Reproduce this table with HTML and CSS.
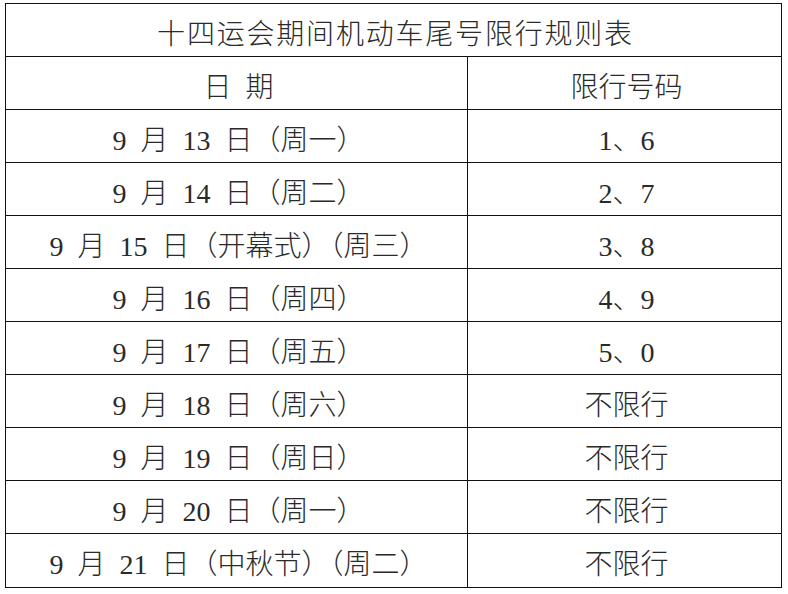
FILE: index.html
```html
<!DOCTYPE html>
<html lang="zh-CN">
<head>
<meta charset="utf-8">
<title>十四运会期间机动车尾号限行规则表</title>
<link rel="stylesheet" href="styles.css">
</head>
<body>
<table class="rules">
  <colgroup><col class="col-date"><col class="col-nums"></colgroup>
  <tr class="title-row"><td colspan="2" class="title">十四运会期间机动车尾号限行规则表</td></tr>
  <tr class="head-row"><td class="date">日 期</td><td class="nums">限行号码</td></tr>
  <tr><td class="date">9 月 13 日（周一）</td><td class="nums">1、6</td></tr>
  <tr><td class="date">9 月 14 日（周二）</td><td class="nums">2、7</td></tr>
  <tr><td class="date">9 月 15 日（开幕式）（周三）</td><td class="nums">3、8</td></tr>
  <tr><td class="date">9 月 16 日（周四）</td><td class="nums">4、9</td></tr>
  <tr><td class="date">9 月 17 日（周五）</td><td class="nums">5、0</td></tr>
  <tr><td class="date">9 月 18 日（周六）</td><td class="nums">不限行</td></tr>
  <tr><td class="date">9 月 19 日（周日）</td><td class="nums">不限行</td></tr>
  <tr><td class="date">9 月 20 日（周一）</td><td class="nums">不限行</td></tr>
  <tr class="last-row"><td class="date">9 月 21 日（中秋节）（周二）</td><td class="nums">不限行</td></tr>
</table>
</body>
</html>
```

FILE: styles.css
```css
html, body {
  margin: 0;
  padding: 0;
  background: #ffffff;
}

body {
  padding: 3px 0 0 5px;
  font-family: "Liberation Serif", "Noto Sans CJK SC", serif;
  font-weight: 300;
  color: #2a2a2a;
}

.rules {
  border-collapse: collapse;
  width: 776px;
  table-layout: fixed;
}

.rules .col-date {
  width: 462px;
}

.rules .col-nums {
  width: 314px;
}

.rules td {
  border: 1px solid #111111;
  height: 53px;
  padding: 9px 0 0 0;
  box-sizing: border-box;
  text-align: center;
  vertical-align: middle;
  font-size: 28px;
  line-height: 1;
  white-space: nowrap;
}

.rules .last-row td {
  height: 54px;
}

.rules td.date {
  word-spacing: 7px;
  padding-left: 4px;
}

.rules td.nums {
  padding-left: 4px;
}

.rules td.title {
  letter-spacing: 1.8px;
  padding-left: 4px;
}
```
